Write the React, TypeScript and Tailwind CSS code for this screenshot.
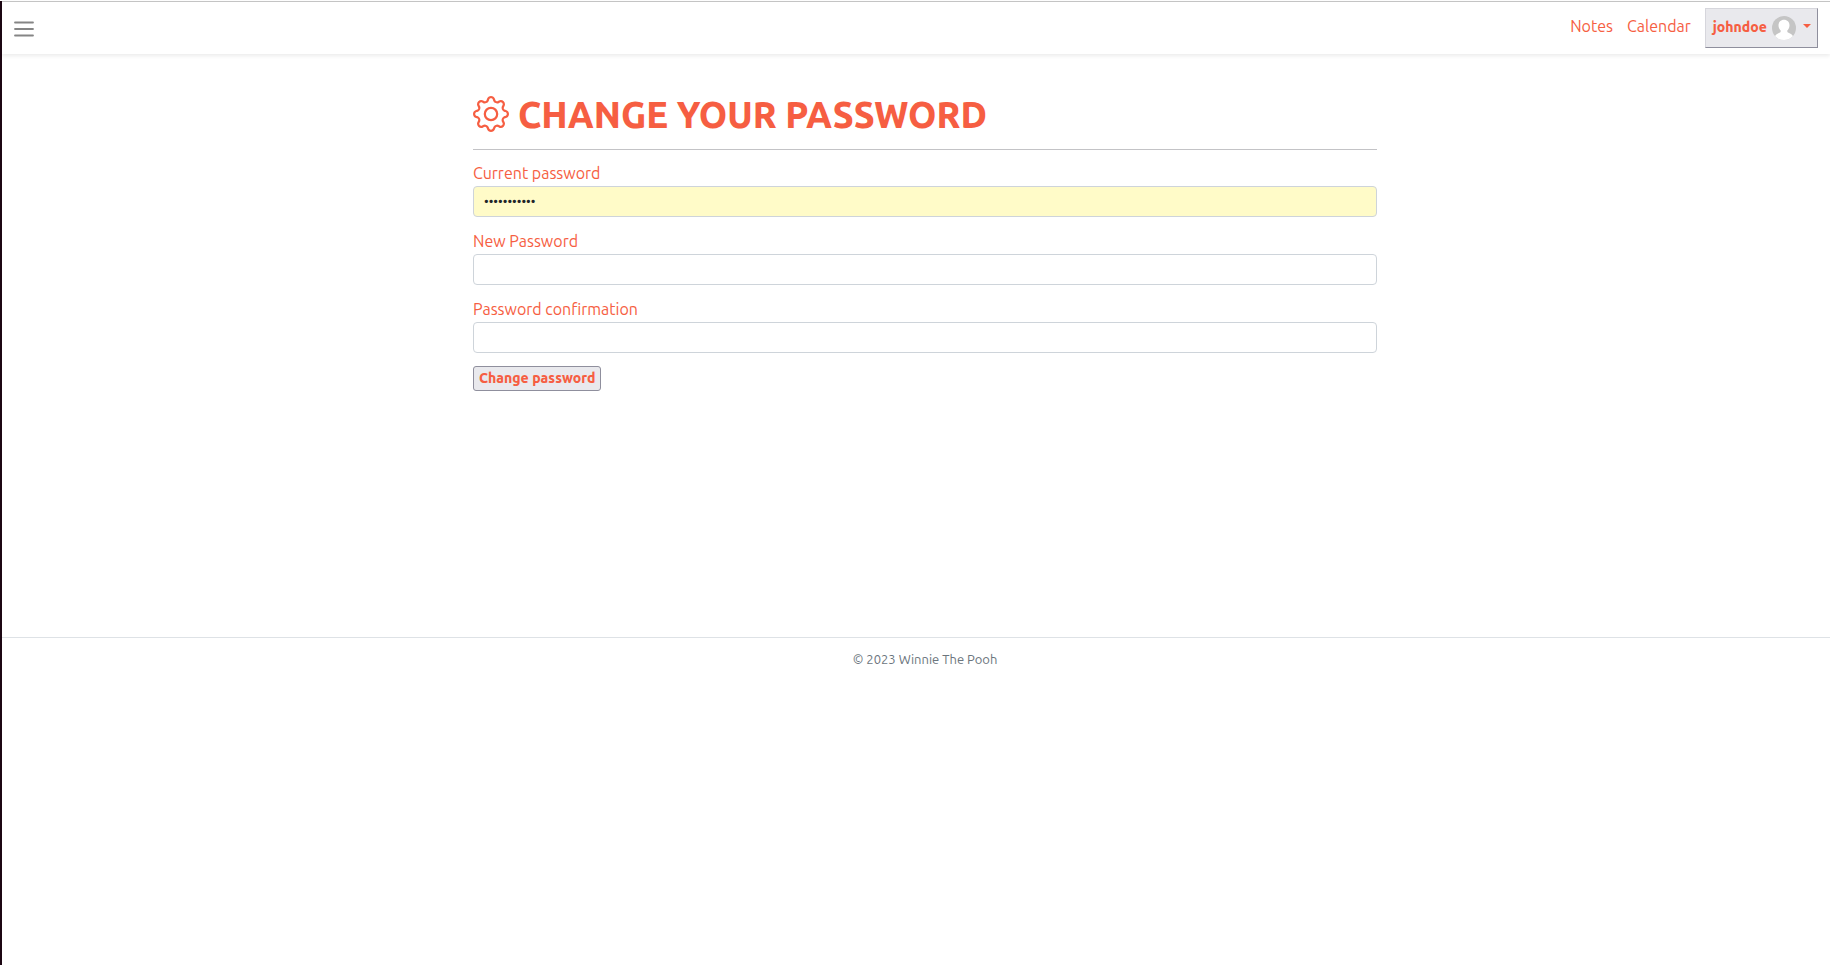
import { BsGear } from "react-icons/bs";

type FieldProps = {
  id: string;
  label: string;
  value?: string;
  filled?: boolean;
};

function PasswordField({ id, label, value, filled }: FieldProps) {
  return (
    <div className="mb-3 flex flex-col">
      <label htmlFor={id} className="text-base leading-[25px]">
        {label}
      </label>
      <input
        id={id}
        type="password"
        defaultValue={value}
        className={`h-[31px] w-full rounded-[4px] border border-[#ced4da] px-2.5 pb-0.5 text-[13px] text-[#212529] ${
          filled ? "bg-[#fffbc8]" : "bg-white"
        }`}
      />
    </div>
  );
}

function Avatar() {
  return (
    <svg viewBox="0 0 24 24" className="size-6" aria-hidden="true">
      <defs>
        <clipPath id="avatar-circle">
          <circle cx="12" cy="12" r="12" />
        </clipPath>
      </defs>
      <g clipPath="url(#avatar-circle)">
        <rect width="24" height="24" fill="#c5c5c5" />
        <path
          d="M12 3.8c3.2 0 5.5 2.3 5.5 5.5 0 2.3-.9 4.100-2.200 5.200v.9c0 .7.4 1.100 1.200 1.400 2.100.8 3.900 1.900 5 4.200V24H2.500v-3c1.100-2.300 2.900-3.400 5-4.200.8-.3 1.200-.7 1.200-1.400v-.9C7.400 13.400 6.500 11.600 6.500 9.300c0-3.200 2.300-5.500 5.500-5.500Z"
          fill="#fff"
        />
      </g>
    </svg>
  );
}

export default function App() {
  return (
    <div className="min-h-screen border-l-2 border-[#1c0713] bg-white font-['Ubuntu','Noto_Sans',sans-serif] text-[#f65e42]">
      <header className="mt-px flex h-[53px] items-start justify-between border-t border-[#c4c4c4] pt-1.5 pr-3 pl-3 shadow-[0_2px_4px_rgba(0,0,0,0.08)]">
        <button type="button" aria-label="Toggle menu" className="mt-[13px] flex size-5 items-start">
          <svg viewBox="0 0 20 16" className="h-4 w-5" stroke="#858585" strokeWidth="1.8" strokeLinecap="round">
            <path d="M1 1.5h18M1 8h18M1 14.5h18" />
          </svg>
        </button>
        <nav className="flex items-start">
          <a href="#notes" className="mr-3.5 pt-1.5 text-base leading-6">
            Notes
          </a>
          <a href="#calendar" className="mr-3.5 pt-1.5 text-base leading-6">
            Calendar
          </a>
          <button
            type="button"
            aria-haspopup="menu"
            className="flex h-10 items-start border border-t-[#d6d6dc] border-r-[#8f8f9d] border-b-[#8f8f9d] border-l-[#d6d6dc] bg-[#e9e9ed] pt-[7px] pr-1.5 pl-[7px] text-sm font-extrabold"
          >
            <span className="mr-[5px] leading-[22px]">johndoe</span>
            <Avatar />
            <svg viewBox="0 0 8 4" className="mt-2 ml-[7px] h-1 w-2" fill="currentColor" aria-hidden="true">
              <path d="M0 0h8L4 4Z" />
            </svg>
          </button>
        </nav>
      </header>

      <main className="min-h-[583px] pt-[42px] pl-[18px]">
        <div className="mx-auto max-w-[904px]">
          <h1 className="flex h-[54px] items-start gap-[9px] border-b border-[#c3c3c6] text-[36px] leading-[38px] font-extrabold">
            <BsGear className="size-9 shrink-0" aria-hidden="true" />
            CHANGE YOUR PASSWORD
          </h1>
          <form className="pt-[11px]" onSubmit={(e) => e.preventDefault()}>
            <PasswordField id="current-password" label="Current password" value="password123" filled />
            <PasswordField id="new-password" label="New Password" />
            <PasswordField id="password-confirmation" label="Password confirmation" />
            <button
              type="submit"
              className="h-[25px] rounded-[3px] border border-[#8f8f9d] bg-[#e9e9ed] px-[5px] text-sm leading-5 font-extrabold"
            >
              Change password
            </button>
          </form>
        </div>
      </main>

      <footer className="border-t border-[#dee2e6] pt-[11px] pl-[18px] text-center text-[13px] leading-5 text-[#6c757d]">
        © 2023 Winnie The Pooh
      </footer>
    </div>
  );
}
